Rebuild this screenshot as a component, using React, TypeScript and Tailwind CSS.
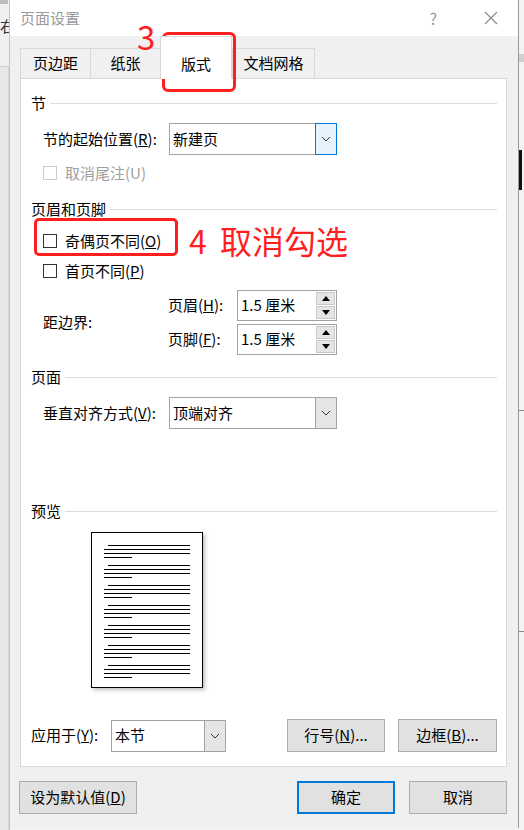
import React from "react";

const Chevron = () => (
  <svg width="10" height="6" viewBox="0 0 10 6" className="block">
    <path d="M1 1 L5 5 L9 1" fill="none" stroke="#333" strokeWidth="1" />
  </svg>
);

const SectionHead = ({ title }: { title: string }) => (
  <div className="flex h-5 items-center gap-1 pr-[9px]">
    <span className="text-[15px] leading-5 text-black">{title}</span>
    <div className="h-px flex-1 bg-[#dcdcdc]" />
  </div>
);

const Check = ({ label, disabled }: { label: React.ReactNode; disabled?: boolean }) => (
  <div className="flex h-5 items-center gap-2 pl-[12px]">
    <div
      className={
        disabled
          ? "h-[14px] w-[14px] border border-[#cccccc] bg-white"
          : "h-[14px] w-[14px] border border-[#333333] bg-white"
      }
    />
    <span className={disabled ? "text-[15px] text-[#a0a0a0]" : "text-[15px] text-black"}>{label}</span>
  </div>
);

const Select = ({ value, active, width }: { value: string; active?: boolean; width: string }) => (
  <div className={`flex h-[32px] ${width} border border-[#a3a3a3] bg-white`}>
    <div className="flex flex-1 items-center pl-[3px] text-[15px] text-black">{value}</div>
    <div
      className={
        active
          ? "-my-px -mr-px flex w-[22px] items-center justify-center border border-[#0078d7] bg-[#e5f1fb]"
          : "flex w-[21px] items-center justify-center border-l border-[#a3a3a3] bg-[#e5e5e5]"
      }
    >
      <Chevron />
    </div>
  </div>
);

const Spin = ({ value }: { value: string }) => (
  <div className="flex h-[31px] w-[100px] border border-[#a3a3a3] bg-white">
    <div className="flex flex-1 items-center pl-[3px] text-[15px] text-black">{value}</div>
    <div className="flex w-[21px] flex-col gap-px p-px">
      <div className="flex flex-1 items-center justify-center border border-[#c8c8c8] bg-[#e5e5e5]">
        <svg width="8" height="5" viewBox="0 0 8 5">
          <path d="M0 5 L4 0 L8 5 Z" fill="#000" />
        </svg>
      </div>
      <div className="flex flex-1 items-center justify-center border border-[#c8c8c8] bg-[#e5e5e5]">
        <svg width="8" height="5" viewBox="0 0 8 5">
          <path d="M0 0 L8 0 L4 5 Z" fill="#000" />
        </svg>
      </div>
    </div>
  </div>
);

const Btn = ({ children, width, primary }: { children: React.ReactNode; width: string; primary?: boolean }) => (
  <div
    className={
      primary
        ? `flex h-[33px] ${width} items-center justify-center border-2 border-[#0078d7] bg-[#e1e1e1] text-[15px] text-black`
        : `flex h-[33px] ${width} items-center justify-center border border-[#adadad] bg-[#e1e1e1] text-[15px] text-black`
    }
  >
    {children}
  </div>
);

const PreviewPage = () => {
  const groups = [0, 1, 2, 3, 4, 5, 6];
  return (
    <div className="ml-[60px] mt-[11px] h-[156px] w-[112px] shadow-[2px_2px_4px_rgba(0,0,0,0.25)]">
      <svg width="112" height="156" viewBox="0 0 112 156" className="block">
        <rect x="0.5" y="0.5" width="111" height="155" fill="#fff" stroke="#000" />
        {groups.map((g) => {
          const y = 13 + g * 20;
          return (
            <g key={g} stroke="#000" strokeWidth="1">
              <line x1="17" y1={y + 0.5} x2="99" y2={y + 0.5} />
              <line x1="13" y1={y + 4.5} x2="99" y2={y + 4.5} />
              <line x1="13" y1={y + 8.5} x2="99" y2={y + 8.5} />
              <line x1="13" y1={y + 12.5} x2="41" y2={y + 12.5} />
            </g>
          );
        })}
      </svg>
    </div>
  );
};

const Tab = ({ label, w, selected }: { label: string; w: string; selected?: boolean }) =>
  selected ? (
    <div
      className={`relative z-10 -mb-px flex h-[43px] ${w} items-center justify-center border-x border-t border-[#d9d9d9] bg-white pt-[13px] text-[15px] text-black`}
    >
      {label}
    </div>
  ) : (
    <div
      className={`flex h-[30px] ${w} items-center justify-center border-l border-t border-[#d9d9d9] bg-[#f0f0f0] text-[15px] text-black last:border-r`}
    >
      {label}
    </div>
  );

export default function App() {
  return (
    <div className="relative flex h-[830px] w-[524px] overflow-hidden bg-[#f3f3f3] font-['Noto_Sans_CJK_SC','Noto_Sans',sans-serif]">
      {/* word document behind, left */}
      <div className="flex w-[10px] flex-col border-r border-[#c4c4c4] bg-[#f0f0f0]">
        <div className="h-[4px] w-[8px] bg-[#bdbdbd]" />
        <div className="mt-[12px] overflow-hidden text-[15px] leading-5 text-[#333]">右</div>
        <div className="mt-[30px] h-px bg-[#cfcfcf]" />
        <div className="flex-1 border-r border-[#d8d8d8] bg-[#e8e8e8]" />
      </div>

      {/* dialog */}
      <div className="flex h-[828px] w-[509px] flex-col border-r border-[#9a9a9a] bg-[#f0f0f0]">
        <div className="flex h-[36px] items-center bg-white pl-[10px] pr-[20px]">
          <span className="text-[15px] text-[#9a9a9a]">页面设置</span>
          <span className="ml-auto mr-[47px] text-[16px] text-[#9a9a9a]">?</span>
          <svg width="14" height="14" viewBox="0 0 14 14">
            <path d="M1 1 L13 13 M13 1 L1 13" stroke="#8a8a8a" strokeWidth="1.2" />
          </svg>
        </div>

        <div className="flex flex-col pl-[10px] pr-[12px]">
          <div className="flex h-[42px] items-end">
            <Tab label="页边距" w="w-[70px]" />
            <Tab label="纸张" w="w-[70px]" />
            <Tab label="版式" w="w-[72px]" selected />
            <Tab label="文档网格" w="w-[83px]" />
          </div>

          <div className="flex h-[689px] w-[487px] flex-col border border-[#d9d9d9] bg-white pl-[10px]">
            <div className="mt-[14px]">
              <SectionHead title="节" />
            </div>
            <div className="mt-[10px] flex items-center pl-[12px]">
              <span className="w-[126px] text-[15px] text-black">
                节的起始位置(<u>R</u>):
              </span>
              <Select value="新建页" active width="w-[168px]" />
            </div>
            <div className="mt-[8px]">
              <Check label="取消尾注(U)" disabled />
            </div>

            <div className="mt-[16px]">
              <SectionHead title="页眉和页脚" />
            </div>
            <div className="mt-[12px]">
              <Check
                label={
                  <>
                    奇偶页不同(<u>O</u>)
                  </>
                }
              />
            </div>
            <div className="mt-[10px]">
              <Check
                label={
                  <>
                    首页不同(<u>P</u>)
                  </>
                }
              />
            </div>
            <div className="mt-[9px] flex items-center pl-[12px]">
              <span className="w-[125px] text-[15px] text-black">距边界:</span>
              <div className="flex flex-col gap-[3px]">
                <div className="flex items-center">
                  <span className="w-[69px] text-[15px] text-black">
                    页眉(<u>H</u>):
                  </span>
                  <Spin value="1.5 厘米" />
                </div>
                <div className="flex items-center">
                  <span className="w-[69px] text-[15px] text-black">
                    页脚(<u>F</u>):
                  </span>
                  <Spin value="1.5 厘米" />
                </div>
              </div>
            </div>

            <div className="mt-[12px]">
              <SectionHead title="页面" />
            </div>
            <div className="mt-[10px] flex items-center pl-[12px]">
              <span className="w-[126px] text-[15px] text-black">
                垂直对齐方式(<u>V</u>):
              </span>
              <Select value="顶端对齐" width="w-[168px]" />
            </div>

            <div className="mt-[72px]">
              <SectionHead title="预览" />
            </div>
            <PreviewPage />

            <div className="mt-[31px] flex items-center">
              <span className="w-[80px] text-[15px] text-black">
                应用于(<u>Y</u>):
              </span>
              <Select value="本节" width="w-[115px]" />
              <div className="ml-[61px]">
                <Btn width="w-[98px]">
                  行号(<u>N</u>)...
                </Btn>
              </div>
              <div className="ml-[13px]">
                <Btn width="w-[99px]">
                  边框(<u>B</u>)...
                </Btn>
              </div>
            </div>
          </div>

          <div className="mt-[14px] flex items-center">
            <div className="-ml-px">
              <Btn width="w-[118px]">
                设为默认值(<u>D</u>)
              </Btn>
            </div>
            <div className="ml-auto">
              <Btn width="w-[98px]" primary>
                确定
              </Btn>
            </div>
            <div className="-mr-px ml-[14px]">
              <Btn width="w-[98px]">取消</Btn>
            </div>
          </div>
        </div>
      </div>

      {/* word document behind, right */}
      <div className="flex flex-1 flex-col bg-[#f3f3f3]">
        <div className="mt-[54px] h-[8px] bg-[#d0d0d0]" />
        <div className="mt-[88px] h-[40px] w-[3px] bg-[#111]" />
        <div className="mt-[220px] h-px bg-[#888]" />
        <div className="mt-[220px] h-px bg-[#888]" />
      </div>

      {/* annotations */}
      <div className="absolute left-[137px] top-[16px] text-[33px] leading-[40px] text-[#ff1f1f]">3</div>
      <div className="absolute left-[162px] top-[32px] h-[60px] w-[74px] rounded-[6px] border-[3px] border-[#ff1f1f]" />
      <div className="absolute left-[34px] top-[218px] h-[38px] w-[144px] rounded-[5px] border-[3px] border-[#ff1f1f]" />
      <div className="absolute left-[189px] top-[220px] text-[32px] leading-[40px] text-[#ff1f1f]">
        4 <span className="ml-[6px]">取消勾选</span>
      </div>
    </div>
  );
}
